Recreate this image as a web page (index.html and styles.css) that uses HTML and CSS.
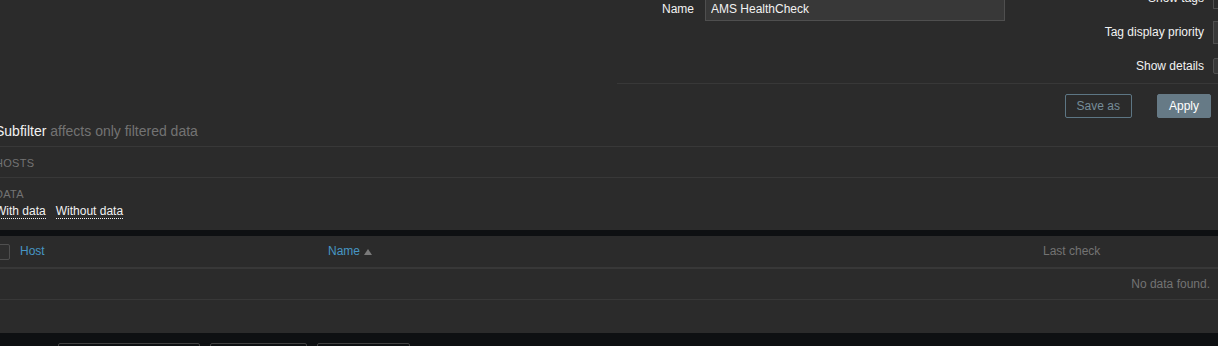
FILE: index.html
```html
<!DOCTYPE html>
<html lang="en">
<head>
    <meta charset="UTF-8">
    <meta name="viewport" content="width=device-width, initial-scale=1.0">
    <title>Latest data</title>
    <link rel="stylesheet" href="styles.css">
</head>
<body>

    <div class="page">
        <div class="filter">
            <div class="filter-cols">
                <div class="filter-main">
                    <div class="form-row">
                        <label for="name" class="form-label">Name</label>
                        <input type="text" id="name" class="text-input name-input" value="AMS HealthCheck">
                    </div>
                </div>
                <div class="filter-side">
                    <span class="form-label">Show tags</span>
                    <span class="radio-group"></span>

                    <span class="form-label">Tag display priority</span>
                    <input type="text" class="text-input side-input">

                    <span class="form-label">Show details</span>
                    <span class="checkbox"></span>
                </div>
            </div>

            <div class="filter-divider"></div>

            <div class="filter-buttons">
                <button type="button" class="btn-alt">Save as</button>
                <button type="submit" class="btn">Apply</button>
            </div>

            <div class="subfilter">
                <div class="subfilter-title">Subfilter <span class="muted">affects only filtered data</span></div>
                <div class="subfilter-group hosts">
                    <h4>Hosts</h4>
                </div>
                <div class="subfilter-group">
                    <h4>Data</h4>
                    <div class="subfilter-links">
                        <a href="#">With data</a>
                        <a href="#">Without data</a>
                    </div>
                </div>
            </div>
        </div>

        <div class="list">
            <table class="list-table">
                <colgroup>
                    <col class="col-check">
                    <col class="col-host">
                    <col class="col-name">
                    <col>
                </colgroup>
                <thead>
                    <tr>
                        <th class="cell-check"><span class="checkbox"></span></th>
                        <th><a href="#">Host</a></th>
                        <th><a href="#">Name</a><span class="arrow-up"></span></th>
                        <th class="plain">Last check</th>
                    </tr>
                </thead>
                <tbody>
                    <tr>
                        <td colspan="4" class="no-data">No data found.</td>
                    </tr>
                </tbody>
            </table>
        </div>

        <div class="action-bar">
            <span class="selected-count">0 selected</span>
            <button type="button" class="btn-footer">Display stacked graph</button>
            <button type="button" class="btn-footer">Display graph</button>
            <button type="button" class="btn-footer">Execute now</button>
        </div>
    </div>

</body>
</html>
```

FILE: styles.css
```css
body {
    font-family: 'Liberation Sans', Arial, sans-serif;
    font-size: 12px;
    background-color: #0e1012;
    color: #f2f2f2;
    margin: 0;
    padding: 0;
    overflow: hidden;
}

.page {
    margin: -14px 0 0 -5px;
}

/* filter */
.filter {
    background-color: #2b2b2b;
    overflow: hidden;
}

.filter-cols {
    display: flex;
}

.filter-main {
    width: 1010px;
    flex-shrink: 0;
    padding-top: 11px;
    display: flex;
    justify-content: flex-end;
    align-items: flex-start;
}

.form-row {
    display: flex;
    align-items: center;
}

.form-label {
    line-height: 14px;
    white-space: nowrap;
}

.form-row .form-label {
    margin-right: 11px;
}

.text-input {
    height: 24px;
    box-sizing: border-box;
    padding: 0 5px;
    border: 1px solid #4f4f4f;
    background-color: #383838;
    color: #f2f2f2;
    font-family: inherit;
    font-size: 12px;
    outline: none;
}

.name-input {
    width: 300px;
}

.filter-side {
    flex-shrink: 0;
    display: grid;
    grid-template-columns: 199px 80px;
    grid-auto-rows: 24px;
    column-gap: 9px;
    row-gap: 10px;
    align-items: center;
}

.filter-side .form-label {
    text-align: right;
}

.radio-group {
    display: block;
    height: 22px;
    border: 1px solid #4f4f4f;
    box-sizing: border-box;
}

.side-input {
    width: 80px;
    height: 23px;
}

.checkbox {
    display: block;
    width: 16px;
    height: 16px;
    box-sizing: border-box;
    border: 1px solid #4f4f4f;
    border-radius: 2px;
    background-color: #383838;
}

.filter-divider {
    height: 1px;
    margin: 5px 0 0 622px;
    background-color: #383838;
}

.filter-buttons {
    display: flex;
    justify-content: flex-end;
    gap: 25px;
    margin-top: 10px;
    padding-right: 7px;
}

.btn,
.btn-alt {
    height: 24px;
    padding: 0 11px;
    border-radius: 2px;
    font-family: inherit;
    font-size: 12px;
    cursor: pointer;
}

.btn {
    background-color: #667a86;
    border: 1px solid #667a86;
    color: #fff;
}

.btn-alt {
    background-color: transparent;
    border: 1px solid #5d7684;
    color: #768d99;
}

/* subfilter */
.subfilter-title {
    margin-top: 5px;
    padding-bottom: 7px;
    font-size: 14px;
    line-height: 16px;
    border-bottom: 1px solid #383838;
}

.muted {
    color: #737373;
}

.subfilter-group {
    padding: 8px 0;
}

.subfilter-group.hosts {
    padding: 9px 0 7px;
    border-bottom: 1px solid #383838;
}

.subfilter-group:last-child {
    padding: 9px 0 11px;
}

.subfilter-group h4 {
    margin: 0;
    font-size: 11px;
    font-weight: normal;
    line-height: 14px;
    letter-spacing: 0.3px;
    text-transform: uppercase;
    color: #737373;
}

.subfilter-links {
    display: flex;
    gap: 10px;
    margin-top: 3px;
}

.subfilter-links a {
    color: #f2f2f2;
    text-decoration: none;
    line-height: 14px;
    border-bottom: 1px dotted #f2f2f2;
}

/* table */
.list {
    margin-top: 6px;
    padding-bottom: 33px;
    background-color: #2b2b2b;
}

.list-table {
    width: 100%;
    table-layout: fixed;
    border-collapse: separate;
    border-spacing: 0;
}

.col-check {
    width: 20px;
}

.col-host {
    width: 308px;
}

.col-name {
    width: 715px;
}

.list-table th {
    padding: 8px 5px;
    line-height: 15px;
    text-align: left;
    font-weight: normal;
    white-space: nowrap;
    border-bottom: 2px solid #383838;
}

.list-table th.cell-check {
    padding: 0;
}

.list-table th a {
    color: #4796c4;
    text-decoration: none;
}

.list-table th.plain {
    color: #737373;
}

.arrow-up {
    display: inline-block;
    margin-left: 4px;
    vertical-align: middle;
    border-left: 4px solid transparent;
    border-right: 4px solid transparent;
    border-bottom: 6px solid #7a7a7a;
}

.cell-check .checkbox {
    margin-left: -1px;
    background-color: #2e2e2e;
}

.list-table td {
    padding: 8px 5px;
    line-height: 14px;
    border-bottom: 1px solid #383838;
}

.no-data {
    text-align: right;
    padding-right: 8px !important;
    color: #737373;
}

/* footer */
.action-bar {
    display: flex;
    align-items: center;
    padding-top: 10px;
}

.selected-count {
    color: #737373;
    margin-right: 8px;
}

.btn-footer {
    height: 24px;
    margin-right: 10px;
    padding: 0 11px;
    border: 1px solid #414141;
    border-radius: 2px;
    background-color: transparent;
    color: #4f4f4f;
    font-family: inherit;
    font-size: 12px;
}
```
